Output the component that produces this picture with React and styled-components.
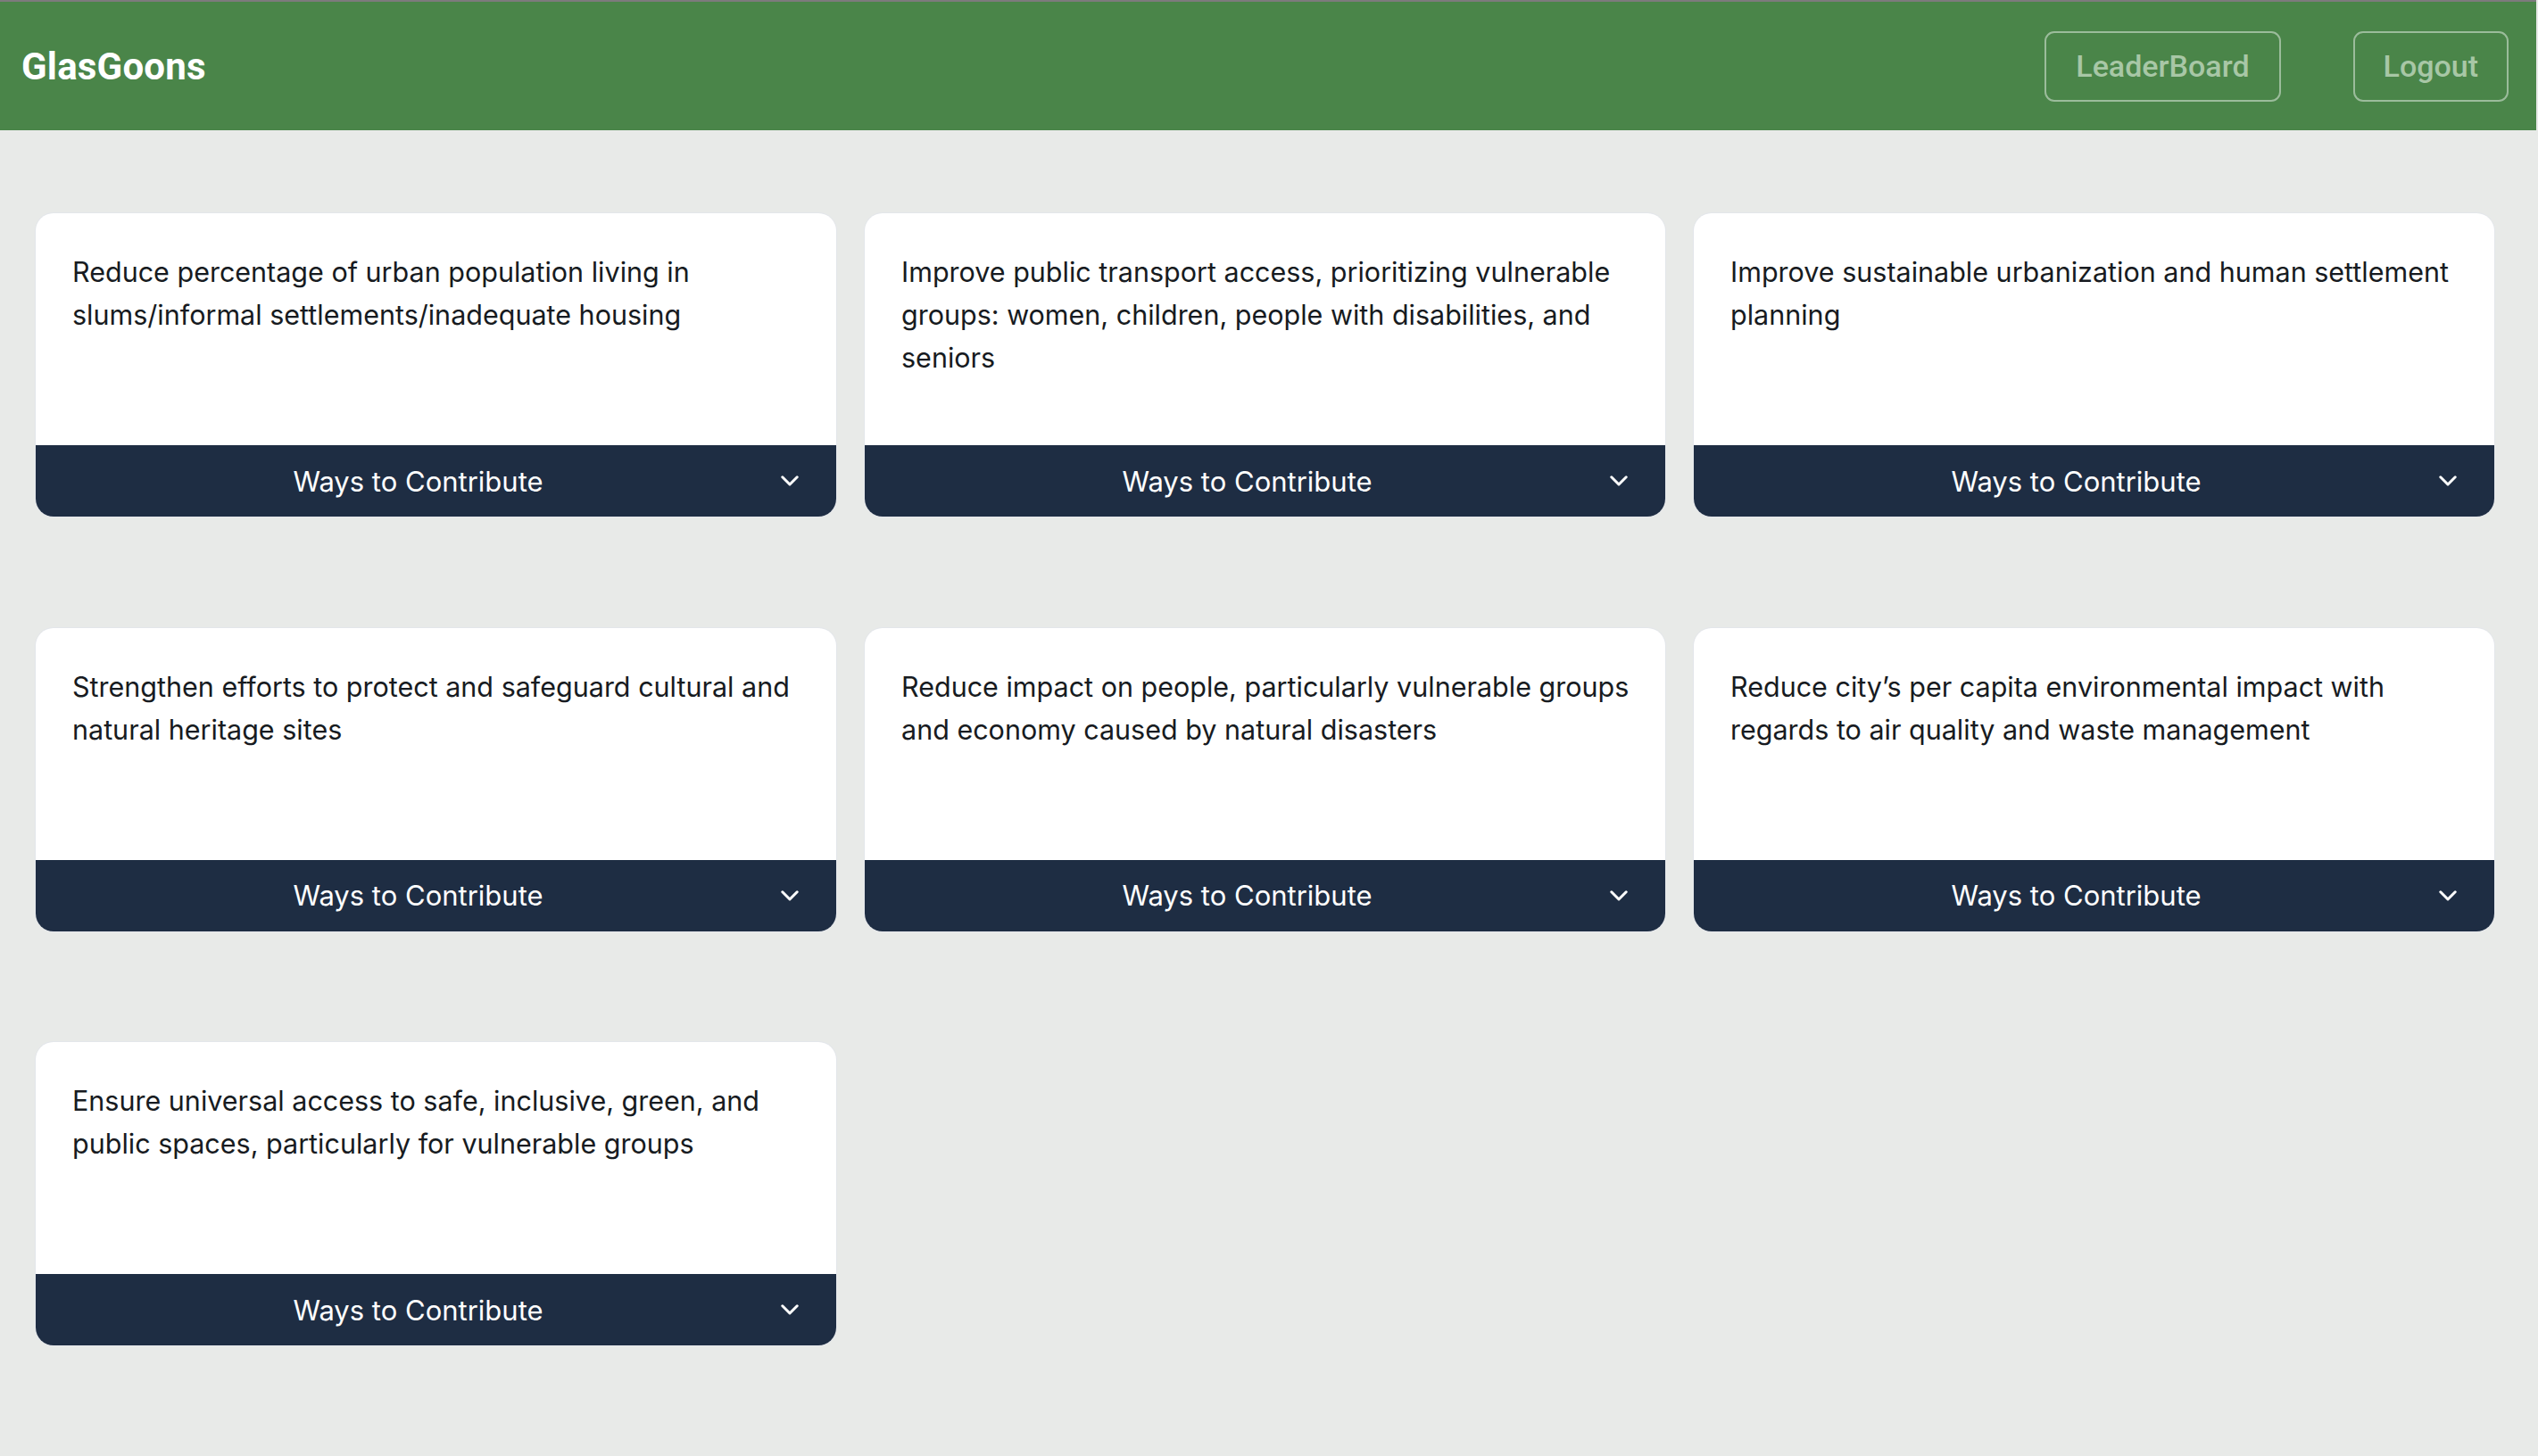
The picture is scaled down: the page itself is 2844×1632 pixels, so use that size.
import React from "react";
import styled, { createGlobalStyle } from "styled-components";

const GlobalStyle = createGlobalStyle`
  * {
    box-sizing: border-box;
  }
  body {
    margin: 0;
    background: #e8eae8;
    font-family: Inter, "Noto Sans", sans-serif;
  }
`;

const Page = styled.div`
  min-height: 1632px;
  background: #e8eae8;
`;

const NavBar = styled.header`
  height: 146px;
  background: #4a8549;
  border-top: 2px solid #7d7a7d;
  display: flex;
  align-items: center;
  justify-content: space-between;
  padding: 0 31px 0 24px;
  margin-right: 2px;
`;

const Brand = styled.h1`
  margin: 0;
  font-family: Roboto, "Liberation Sans", sans-serif;
  font-weight: 700;
  font-size: 42px;
  color: #ffffff;
  letter-spacing: 0.2px;
`;

const NavActions = styled.nav`
  display: flex;
  gap: 81px;
`;

const NavButton = styled.button`
  height: 79px;
  padding: 0 ${(props) => props.$pad || 33}px;
  background: transparent;
  border: 2px solid rgba(255, 255, 255, 0.45);
  border-radius: 11px;
  color: #a8c7a6;
  font-family: Roboto, "Liberation Sans", sans-serif;
  font-weight: 500;
  font-size: 34px;
  cursor: pointer;
`;

const Grid = styled.main`
  display: grid;
  grid-template-columns: repeat(3, 897px);
  column-gap: 32px;
  row-gap: 124.5px;
  padding: 93px 0 0 40px;
`;

const Card = styled.div`
  height: 340px;
  background: #ffffff;
  box-shadow: 0 0 0 1px #e3e6ea;
  border-radius: 20px;
  overflow: hidden;
  display: flex;
  flex-direction: column;
`;

const Goal = styled.p`
  flex: 1;
  margin: 0;
  padding: 42px 30px 0 41px;
  font-size: 30.5px;
  line-height: 48px;
  color: #171b21;
`;

const Footer = styled.button`
  height: 80px;
  flex-shrink: 0;
  border: none;
  background: #1e2d43;
  color: #ffffff;
  display: flex;
  align-items: center;
  padding: 0 42px;
  font-family: Inter, "Noto Sans", sans-serif;
  font-size: 31px;
  cursor: pointer;
`;

const FooterLabel = styled.span`
  flex: 1;
  text-align: center;
`;

const Chevron = styled.svg`
  width: 20px;
  height: 12px;
  margin-left: 20px;
`;

const goals = [
  "Reduce percentage of urban population living in slums/informal settlements/inadequate housing",
  "Improve public transport access, prioritizing vulnerable groups: women, children, people with disabilities, and seniors",
  "Improve sustainable urbanization and human settlement planning",
  "Strengthen efforts to protect and safeguard cultural and natural heritage sites",
  "Reduce impact on people, particularly vulnerable groups and economy caused by natural disasters",
  "Reduce city\u2019s per capita environmental impact with regards to air quality and waste management",
  "Ensure universal access to safe, inclusive, green, and public spaces, particularly for vulnerable groups",
];

function GoalCard({ text }) {
  return (
    <Card>
      <Goal>{text}</Goal>
      <Footer>
        <FooterLabel>Ways to Contribute</FooterLabel>
        <Chevron viewBox="0 0 20 12" fill="none">
          <polyline
            points="1.8,1.8 10,10 18.2,1.8"
            stroke="#ffffff"
            strokeWidth="3"
            strokeLinecap="round"
            strokeLinejoin="round"
          />
        </Chevron>
      </Footer>
    </Card>
  );
}

export default function App() {
  return (
    <Page>
      <GlobalStyle />
      <NavBar>
        <Brand>GlasGoons</Brand>
        <NavActions>
          <NavButton>LeaderBoard</NavButton>
          <NavButton $pad={32}>Logout</NavButton>
        </NavActions>
      </NavBar>
      <Grid>
        {goals.map((g) => (
          <GoalCard key={g} text={g} />
        ))}
      </Grid>
    </Page>
  );
}
